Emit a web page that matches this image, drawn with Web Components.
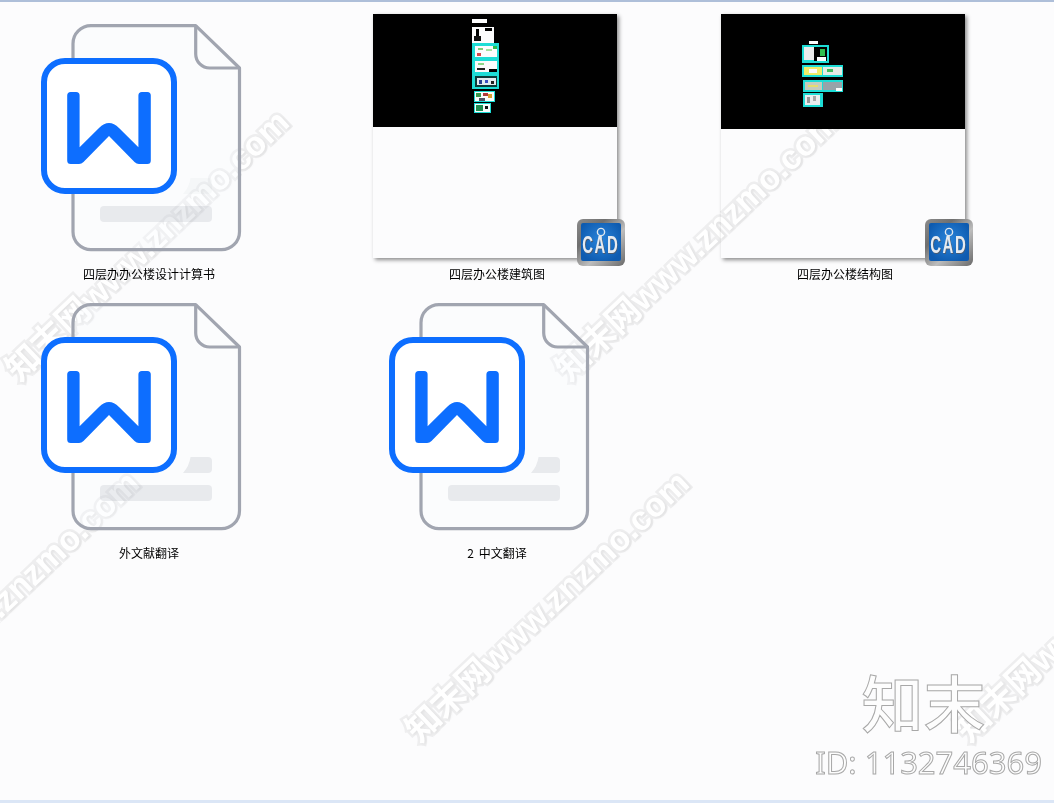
<!DOCTYPE html>
<html lang="zh">
<head>
<meta charset="utf-8">
<title>文件夹</title>
<style>
  html, body { margin: 0; height: 100%; }
  body {
    background: #fcfcfd;
    overflow: hidden;
    font-family: "Noto Sans CJK SC", "Noto Sans", sans-serif;
  }
</style>
</head>
<body>
<file-window>
  <zn-watermark slot="back"></zn-watermark>

  <file-item label="四层办办公楼设计计算书"><word-icon faded></word-icon></file-item>

  <file-item label="四层办公楼建筑图">
    <cad-thumb split="113">
      <svg viewBox="0 0 244 113" width="244" height="113">
        <rect x="99" y="5" width="15" height="4" fill="#fff"/>
        <rect x="99" y="13" width="22" height="16" fill="#fff"/>
        <rect x="103" y="15" width="3" height="11" fill="#000"/>
        <rect x="101" y="22" width="7" height="5" fill="#111"/>
        <rect x="112" y="14" width="7" height="3" fill="#000"/>
        <rect x="99" y="29" width="27" height="46" fill="#1de0d8"/>
        <rect x="102" y="32" width="22" height="11" fill="#fff"/>
        <rect x="105" y="34" width="5" height="2" fill="#7fcf7a"/>
        <rect x="113" y="35" width="6" height="2" fill="#a6e39f"/>
        <rect x="104" y="39" width="4" height="3" fill="#d84a4a"/>
        <rect x="120" y="32" width="4" height="3" fill="#2fbf4f"/>
        <rect x="102" y="47" width="22" height="11" fill="#fff"/>
        <rect x="105" y="49" width="6" height="2" fill="#8fd98a"/>
        <rect x="104" y="54" width="8" height="2" fill="#222"/>
        <rect x="116" y="55" width="8" height="3" fill="#000"/>
        <rect x="102" y="62" width="22" height="11" fill="#0b3c3a"/>
        <rect x="104" y="64" width="19" height="7" fill="#e6eef2"/>
        <rect x="106" y="66" width="3" height="4" fill="#2a3f8f"/>
        <rect x="112" y="66" width="3" height="3" fill="#3a4fbf"/>
        <rect x="118" y="67" width="3" height="3" fill="#222"/>
        <rect x="101" y="77" width="21" height="11" fill="#1de0d8"/>
        <rect x="102" y="78" width="19" height="9" fill="#fff"/>
        <rect x="103" y="79" width="5" height="4" fill="#3a9a4a"/>
        <rect x="110" y="79" width="5" height="3" fill="#b03a3a"/>
        <rect x="115" y="80" width="4" height="4" fill="#e0a030"/>
        <rect x="106" y="84" width="6" height="3" fill="#556"/>
        <rect x="101" y="89" width="17" height="10" fill="#1de0d8"/>
        <rect x="102" y="90" width="15" height="8" fill="#fff"/>
        <rect x="103" y="91" width="7" height="6" fill="#1f8f4f"/>
        <rect x="112" y="92" width="3" height="3" fill="#111"/>
      </svg>
    </cad-thumb>
  </file-item>

  <file-item label="四层办公楼结构图">
    <cad-thumb split="115">
      <svg viewBox="0 0 244 115" width="244" height="115">
        <rect x="88" y="27" width="9" height="3" fill="#fff"/>
        <rect x="81" y="31" width="27" height="18" fill="#1de0d8"/>
        <rect x="83" y="33" width="10" height="13" fill="#eee"/>
        <rect x="93" y="33" width="13" height="14" fill="#000"/>
        <rect x="99" y="35" width="5" height="7" fill="#2fbf4f"/>
        <rect x="96" y="43" width="9" height="4" fill="#fff"/>
        <rect x="81" y="51" width="41" height="12" fill="#1de0d8"/>
        <rect x="83" y="53" width="18" height="8" fill="#f4f06a"/>
        <rect x="88" y="55" width="8" height="4" fill="#fff"/>
        <rect x="102" y="53" width="19" height="8" fill="#e8efe8"/>
        <rect x="106" y="55" width="6" height="3" fill="#3fbf5f"/>
        <rect x="82" y="66" width="40" height="12" fill="#1de0d8"/>
        <rect x="84" y="68" width="17" height="8" fill="#c8cfc0"/>
        <rect x="87" y="71" width="10" height="2" fill="#e8e070"/>
        <rect x="102" y="68" width="19" height="8" fill="#9aa5aa"/>
        <rect x="115" y="74" width="6" height="3" fill="#fff"/>
        <rect x="82" y="79" width="20" height="14" fill="#1de0d8"/>
        <rect x="84" y="81" width="15" height="10" fill="#eef2f2"/>
        <rect x="86" y="83" width="3" height="6" fill="#999"/>
        <rect x="92" y="82" width="3" height="5" fill="#aaa"/>
      </svg>
    </cad-thumb>
  </file-item>

  <file-item label="外文献翻译"><word-icon></word-icon></file-item>
  <file-item label="2 中文翻译"><word-icon></word-icon></file-item>

  <id-stamp slot="front" mark="知末" code="ID: 1132746369"></id-stamp>
</file-window>

<script>
class FileWindow extends HTMLElement {
  constructor() {
    super();
    this.attachShadow({ mode: 'open' });
    this.shadowRoot.innerHTML = `
      <style>
        :host {
          display: block;
          position: relative;
          width: 1054px;
          height: 803px;
          box-sizing: border-box;
          border-top: 2px solid #aebfd9;
          border-bottom: 3px solid #dbe6f6;
          overflow: hidden;
        }
        .grid {
          position: relative;
          display: grid;
          grid-template-columns: repeat(3, 298px);
          column-gap: 50px;
          row-gap: 7px;
          padding-top: 8px;
        }
      </style>
      <slot name="back"></slot>
      <div class="grid"><slot></slot></div>
      <slot name="front"></slot>
    `;
  }
}

class FileItem extends HTMLElement {
  constructor() {
    super();
    this.attachShadow({ mode: 'open' });
    this.shadowRoot.innerHTML = `
      <style>
        :host {
          display: flex;
          flex-direction: column;
          align-items: center;
        }
        .icon {
          position: relative;
          width: 256px;
          height: 256px;
        }
        .label {
          font-size: 12px;
          line-height: 16px;
          color: #000;
          white-space: nowrap;
          word-spacing: 2px;
        }
      </style>
      <div class="icon"><slot></slot></div>
      <div class="label"></div>
    `;
    this.shadowRoot.querySelector('.label').textContent = this.getAttribute('label');
  }
}

class WordIcon extends HTMLElement {
  constructor() {
    super();
    this.attachShadow({ mode: 'open' });
    // body is see-through so the watermark behind it still shows
    const topBar = this.hasAttribute('faded') ? 0.3 : 1;
    this.shadowRoot.innerHTML = `
      <style>
        :host { display: block; width: 256px; height: 256px; }
        svg { display: block; }
      </style>
      <svg viewBox="0 0 256 256" width="256" height="256" fill="none">
        <path d="M70 15.7H174.7L218.5 58V221.7a18 18 0 0 1-18 18H70a18 18 0 0 1-18-18V33.7a18 18 0 0 1 18-18Z"
              fill="rgba(248,252,255,.3)" stroke="#a1a5b0" stroke-width="3.2" stroke-linejoin="round"/>
        <path d="M174.7 15.7V44a14 14 0 0 0 14 14H218.5" stroke="#a1a5b0" stroke-width="3.2" stroke-linejoin="round"/>
        <path d="M169.5 168H187a4 4 0 0 1 4 4V180a4 4 0 0 1-4 4H162A30 30 0 0 0 169.5 168Z"
              fill="rgba(40,60,80,.09)" opacity="${topBar}"/>
        <rect x="79" y="196" width="112" height="16" rx="4" fill="rgba(40,60,80,.09)"/>
        <rect x="23" y="51" width="130" height="130" rx="21" fill="#fff" stroke="#0d6eff" stroke-width="6"/>
        <path fill="#0d6eff" d="M49.7 82H55.1Q58.6 82 58.6 85.5V137.3L78 117.9Q88 107.9 98 117.9L117.4 137.3V85.5Q117.4 82 120.9 82H126.3Q129.8 82 129.8 85.5V150.5Q129.8 154 126.3 154H118Q115.5 154 113.5 152L88 126L62.5 152Q60.5 154 58 154H49.7Q46.2 154 46.2 150.5V85.5Q46.2 82 49.7 82Z"/>
      </svg>
    `;
  }
}

class CadThumb extends HTMLElement {
  constructor() {
    super();
    this.attachShadow({ mode: 'open' });
    const split = this.getAttribute('split') || 113;
    this.shadowRoot.innerHTML = `
      <style>
        :host {
          display: block;
          width: 256px;
          height: 256px;
        }
        .sheet {
          width: 244px;
          height: 244px;
          margin: 4px 0 0 4px;
          background: #fff;
          box-shadow: 2px 2px 4px rgba(0, 0, 0, .45);
          mix-blend-mode: multiply;
        }
        .top {
          height: ${split}px;
          background: #000;
          overflow: hidden;
        }
        ::slotted(svg) { display: block; filter: blur(.5px); }
      </style>
      <div class="sheet"><div class="top"><slot></slot></div></div>
      <cad-badge></cad-badge>
    `;
  }
}

class CadBadge extends HTMLElement {
  constructor() {
    super();
    this.attachShadow({ mode: 'open' });
    this.shadowRoot.innerHTML = `
      <style>
        :host {
          position: absolute;
          right: 0;
          bottom: 0;
          width: 48px;
          height: 47px;
          box-sizing: border-box;
          padding: 4px 4px 5px;
          border-radius: 6px;
          background: linear-gradient(135deg, #8c8c8c, #6f6f6f 30%, #bdbdbd 60%, #6a6a6a);
        }
        .face {
          position: relative;
          height: 100%;
          border-radius: 2px;
          background: radial-gradient(circle at 50% 45%, #2a84da, #0e5bb0 80%);
          display: flex;
          align-items: center;
          justify-content: center;
          overflow: hidden;
        }
        .txt {
          font: bold 24px/1 "Liberation Sans", sans-serif;
          color: #e6ebf1;
          text-shadow: 1px 1px 0 #4a5a70;
          transform: scaleX(.62);
          letter-spacing: 2.5px;
          margin-top: 5px;
        }
        svg { position: absolute; left: 15px; top: 4px; }
      </style>
      <div class="face">
        <span class="txt">CAD</span>
        <svg width="10" height="12" viewBox="0 0 10 12" fill="none" stroke="#dfe7ee" stroke-width="1.4">
          <circle cx="5" cy="5" r="3.6"/><path d="M5 8.5V12"/>
        </svg>
      </div>
    `;
  }
}

class ZnWatermark extends HTMLElement {
  constructor() {
    super();
    this.attachShadow({ mode: 'open' });
    const spots = [[147, 245], [697, 245], [-3, 606], [547, 606], [1097, 606]];
    this.shadowRoot.innerHTML = `
      <style>
        :host { position: absolute; inset: -2px 0 0 0; overflow: hidden; display: block; }
        span {
          position: absolute;
          transform: translate(-50%, -50%) rotate(-43.5deg);
          font: 700 34px/1 "Liberation Sans", "Noto Sans CJK SC", sans-serif;
          white-space: nowrap;
          color: #fff;
          -webkit-text-stroke: 5px #eeeeef;
          paint-order: stroke fill;
          text-shadow: 1px 2px 3px rgba(0, 0, 0, .05);
        }
      </style>
      ${spots.map(([x, y]) => `<span style="left:${x}px;top:${y}px">知末网www.znzmo.com</span>`).join('')}
    `;
  }
}

class IdStamp extends HTMLElement {
  constructor() {
    super();
    this.attachShadow({ mode: 'open' });
    this.shadowRoot.innerHTML = `
      <style>
        :host {
          position: absolute;
          right: 12px;
          bottom: 18px;
          display: flex;
          flex-direction: column;
          align-items: center;
          color: #fdfdfd;
          -webkit-text-stroke: 1px #a8a8a8;
          font-family: "Noto Sans CJK SC", "Noto Sans", sans-serif;
          white-space: nowrap;
        }
        .mark { font-size: 62px; line-height: 70px; font-weight: 500; margin-left: -10px; }
        .code { font-size: 31px; line-height: 40px; font-family: "Noto Sans", sans-serif; margin-top: 6px; }
      </style>
      <div class="mark"></div>
      <div class="code"></div>
    `;
    this.shadowRoot.querySelector('.mark').textContent = this.getAttribute('mark');
    this.shadowRoot.querySelector('.code').textContent = this.getAttribute('code');
  }
}

customElements.define('file-window', FileWindow);
customElements.define('file-item', FileItem);
customElements.define('word-icon', WordIcon);
customElements.define('cad-badge', CadBadge);
customElements.define('cad-thumb', CadThumb);
customElements.define('zn-watermark', ZnWatermark);
customElements.define('id-stamp', IdStamp);
</script>
</body>
</html>
